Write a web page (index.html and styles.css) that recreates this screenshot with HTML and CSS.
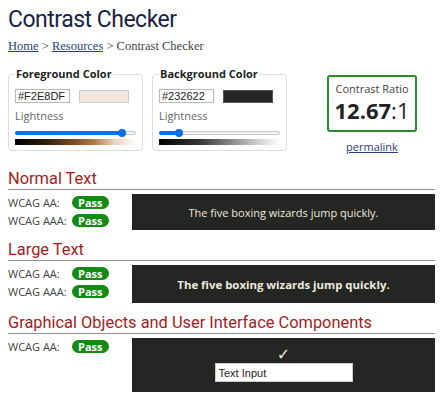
FILE: index.html
```html
<!DOCTYPE html>
<html lang="en">
<head>
  <meta charset="UTF-8" />
  <title>Contrast Checker</title>
  <link rel="stylesheet" href="styles.css">
</head>
<body>
  <h1>Contrast Checker</h1>
  <p class="crumbs"><a href="#">Home</a> &gt; <a href="#">Resources</a> &gt; Contrast Checker</p>

  <div class="pickers">
    <fieldset class="picker">
      <legend>Foreground Color</legend>
      <div class="hex-row">
        <input class="hex" type="text" value="#F2E8DF" />
        <span class="swatch fg"></span>
      </div>
      <label class="light-label">Lightness</label>
      <div class="slider">
        <div class="fill" style="width: 88%"></div>
        <span class="thumb" style="left: 89%"></span>
      </div>
      <div class="grad fg-grad"></div>
    </fieldset>

    <fieldset class="picker">
      <legend>Background Color</legend>
      <div class="hex-row">
        <input class="hex" type="text" value="#232622" />
        <span class="swatch bg"></span>
      </div>
      <label class="light-label">Lightness</label>
      <div class="slider">
        <div class="fill" style="width: 16%"></div>
        <span class="thumb" style="left: 16%"></span>
      </div>
      <div class="grad bg-grad"></div>
    </fieldset>

    <div class="ratio-col">
      <div class="ratio">
        <div class="ratio-label">Contrast Ratio</div>
        <div class="ratio-value"><b>12.67</b>:1</div>
      </div>
      <a class="permalink" href="#">permalink</a>
    </div>
  </div>

  <h2 class="first">Normal Text</h2>
  <div class="result">
    <div class="levels">
      <div class="level"><span class="lvl-name">WCAG AA:</span><span class="pass">Pass</span></div>
      <div class="level"><span class="lvl-name">WCAG AAA:</span><span class="pass">Pass</span></div>
    </div>
    <div class="sample normal">The five boxing wizards jump quickly.</div>
  </div>

  <h2>Large Text</h2>
  <div class="result">
    <div class="levels">
      <div class="level"><span class="lvl-name">WCAG AA:</span><span class="pass">Pass</span></div>
      <div class="level"><span class="lvl-name">WCAG AAA:</span><span class="pass">Pass</span></div>
    </div>
    <div class="sample large">The five boxing wizards jump quickly.</div>
  </div>

  <h2>Graphical Objects and User Interface Components</h2>
  <div class="result">
    <div class="levels">
      <div class="level"><span class="lvl-name">WCAG AA:</span><span class="pass">Pass</span></div>
    </div>
    <div class="sample graphic">
      <span class="check">&#10003;</span>
      <input class="demo-input" type="text" value="Text Input" />
    </div>
  </div>
</body>
</html>
```

FILE: styles.css
```css
body {
  margin: 0;
  padding: 8px 8px 0;
  font-family: "Open Sans", sans-serif;
  color: #333;
  background: #fff;
}
h1 {
  font-family: Roboto, sans-serif;
  font-weight: 400;
  font-size: 23px;
  letter-spacing: -0.5px;
  line-height: 24px;
  color: #1b1f45;
  margin: 0;
}
.crumbs {
  font-family: "Liberation Serif", serif;
  font-size: 12.5px;
  color: #444;
  margin: 6px 0 0;
  line-height: 16px;
}
.crumbs a {
  color: #2c3f7a;
}

/* colour pickers */
.pickers {
  display: flex;
  align-items: flex-start;
  height: 83px;
  margin-top: 13px;
}
.picker {
  width: 135px;
  box-sizing: border-box;
  margin: 0 9px 0 0;
  padding: 0 6px 5px;
  border: 1px solid #ddd;
  border-radius: 4px;
}
.picker legend {
  font-size: 11px;
  font-weight: 700;
  color: #222;
  padding: 0 1px;
  line-height: 14px;
}
.hex-row {
  display: flex;
  align-items: center;
  margin-top: 8px;
}
.hex {
  width: 55px;
  height: 14px;
  box-sizing: border-box;
  border: 1px solid #bbb;
  padding: 0 2px;
  font-family: "Liberation Sans", sans-serif;
  font-size: 11px;
  color: #222;
}
.swatch {
  width: 48px;
  height: 11px;
  margin-left: 9px;
  border: 1px solid #ccc;
}
.swatch.fg {
  background: #f2e8df;
}
.swatch.bg {
  background: #232622;
  border-color: #555;
}
.light-label {
  display: block;
  font-size: 11px;
  color: #666;
  margin-top: 6px;
  line-height: 14px;
}
.slider {
  position: relative;
  width: 121px;
  height: 4px;
  margin: 8px 0 0;
  background: #f4f4f4;
  border: 1px solid #c8c8c8;
  box-sizing: border-box;
  border-radius: 2px;
}
.fill {
  height: 4px;
  margin: -1px 0 0 -1px;
  background: #0a6fe8;
  border-radius: 2px;
}
.thumb {
  position: absolute;
  top: -3px;
  width: 8px;
  height: 8px;
  margin-left: -4px;
  border-radius: 50%;
  background: #0a6fe8;
}
.grad {
  height: 6px;
  width: 121px;
  margin-top: 4px;
}
.fg-grad {
  background: linear-gradient(to right, #000, #2e1c0c 25%, #6e4420 45%, #b07a44 65%, #e8d2bc 82%, #fff);
}
.bg-grad {
  background: linear-gradient(to right, #000, #3a3a3a 35%, #8a8a8a 60%, #d0d0d0 82%, #fff);
}

/* ratio box */
.ratio-col {
  margin-left: 31px;
  margin-top: 8px;
  display: flex;
  flex-direction: column;
  align-items: center;
}
.ratio {
  width: 90px;
  height: 57px;
  box-sizing: border-box;
  border: 2px solid #2b8a2b;
  border-radius: 3px;
  text-align: center;
  padding-top: 5px;
}
.ratio-label {
  font-size: 11px;
  color: #444;
  line-height: 14px;
}
.ratio-value {
  font-size: 22px;
  color: #222;
  line-height: 28px;
}
.permalink {
  font-size: 11px;
  color: #2c3f7a;
  margin-top: 7px;
}

/* results */
h2 {
  font-family: Roboto, sans-serif;
  font-weight: 400;
  font-size: 16.4px;
  color: #a51d1d;
  margin: 10px 0 0;
  line-height: 19px;
  border-bottom: 1px solid #a08c8c;
  padding-bottom: 1px;
}
h2.first {
  margin-top: 19px;
}
.result {
  display: flex;
  margin-top: 4px;
}
.levels {
  width: 124px;
  flex: none;
  margin-top: -1px;
}
.level {
  display: flex;
  align-items: center;
  height: 18px;
}
.lvl-name {
  width: 64px;
  font-size: 11px;
  color: #444;
}
.pass {
  background: #138a13;
  color: #fff;
  font-weight: 700;
  font-size: 11px;
  line-height: 13px;
  padding: 0 6px;
  border-radius: 7px;
}
.sample {
  flex: 1;
  background: #232622;
  color: #f2e8df;
  display: flex;
  align-items: center;
  justify-content: center;
}
.sample.normal {
  height: 36px;
  font-size: 11px;
}
.sample.large {
  height: 38px;
  font-size: 11.4px;
  font-weight: 700;
}
.sample.graphic {
  height: 54px;
  flex-direction: column;
  justify-content: flex-start;
}
.check {
  font-family: "DejaVu Sans", sans-serif;
  font-size: 16px;
  line-height: 16px;
  margin-top: 9px;
}
.demo-input {
  width: 138px;
  height: 19px;
  box-sizing: border-box;
  border: 1px solid #ccc;
  padding: 0 3px;
  font-family: "Liberation Sans", sans-serif;
  font-size: 11px;
  color: #222;
  background: #fff;
}
```
